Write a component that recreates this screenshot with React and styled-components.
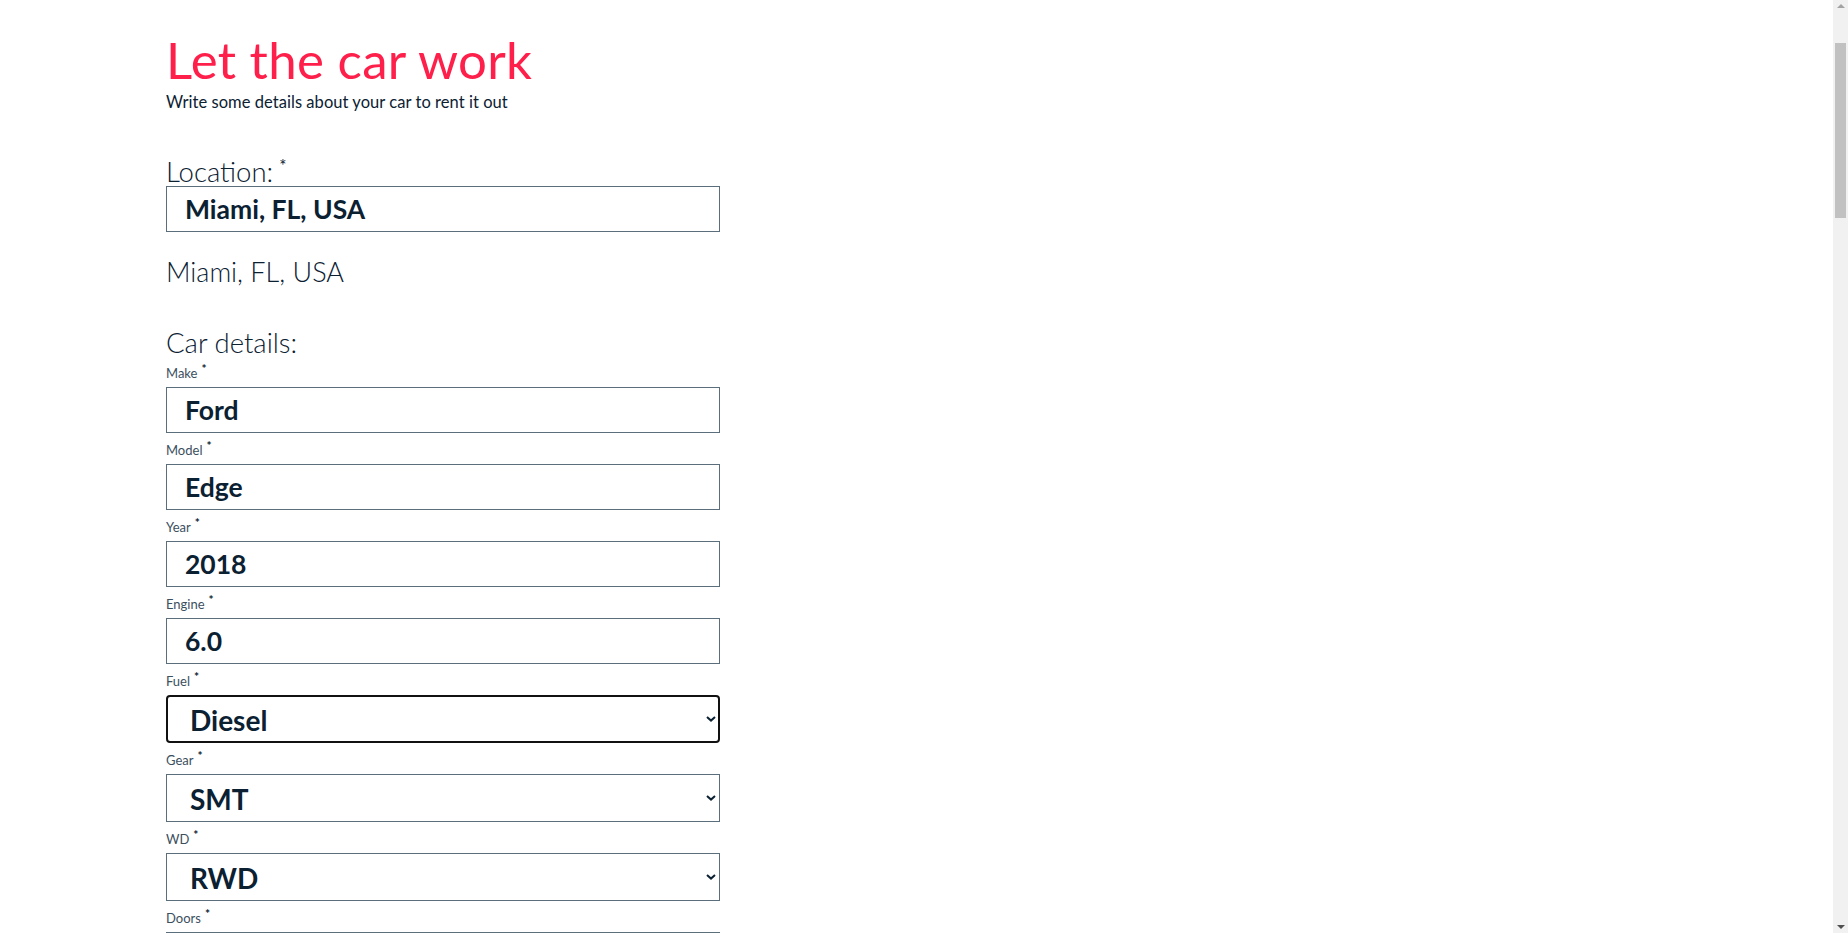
import React from 'react';
import styled, { createGlobalStyle } from 'styled-components';

const GlobalStyle = createGlobalStyle`
	html, body {
		margin: 0;
		padding: 0;
		background: #fff;
	}
	body {
		font-family: Lato, 'Open Sans', sans-serif;
		color: #0b2132;
	}
`;

const fields = [
	{ label: 'Make', value: 'Ford' },
	{ label: 'Model', value: 'Edge' },
	{ label: 'Year', value: '2018' },
	{ label: 'Engine', value: '6.0' },
	{ label: 'Fuel', value: 'Diesel', options: true, focused: true },
	{ label: 'Gear', value: 'SMT', options: true },
	{ label: 'WD', value: 'RWD', options: true },
	{ label: 'Doors', value: '4' },
	{ label: 'Seats', value: '5' },
	{ label: 'Color', value: 'Black' },
	{ label: 'Mileage', value: '24000' },
];

const extras = [
	{ label: 'Price per day', value: '80' },
	{ label: 'Deposit', value: '300' },
	{ label: 'Available from', value: '2020-01-01' },
	{ label: 'Available to', value: '2020-12-31' },
	{ label: 'Phone', value: '' },
	{ label: 'Email', value: '' },
];

const Chevron = () => (
	<svg width="10" height="6" viewBox="0 0 10 6">
		<path d="M1 1 L5 4.6 L9 1" fill="none" stroke="#0b2132" strokeWidth="2" />
	</svg>
);

const Field = ({ label, value, options, focused }) => (
	<FieldBox>
		<Label>{ label }<Star>*</Star></Label>
		{ options ? (
			<SelectBox $focused={ focused }>
				<SelectValue>{ value }</SelectValue>
				<Chevron />
			</SelectBox>
		) : (
			<Input defaultValue={ value } />
		) }
	</FieldBox>
);

const App = () => (
	<>
		<GlobalStyle />
		<Page>
			<Title>Let the car work</Title>
			<Subtitle>Write some details about your car to rent it out</Subtitle>

			<Section $gap={ 45 }>
				<SectionTitle $lh={ 28 }>Location:<BigStar>*</BigStar></SectionTitle>
				<Input defaultValue="Miami, FL, USA" />
				<Address>Miami, FL, USA</Address>
			</Section>

			<Section $gap={ 43 }>
				<SectionTitle $lh={ 26 }>Car details:</SectionTitle>
				{ fields.map(f => <Field key={ f.label } { ...f } />) }
			</Section>

			<Section $gap={ 42 }>
				<SectionTitle $lh={ 26 }>Rental details:</SectionTitle>
				{ extras.map(f => <Field key={ f.label } { ...f } />) }
			</Section>

			<Section $gap={ 42 }>
				<SectionTitle $lh={ 26 }>Description:</SectionTitle>
				<TextArea />
			</Section>

			<Section $gap={ 42 }>
				<SectionTitle $lh={ 26 }>Photos:</SectionTitle>
				<PhotoArea />
			</Section>

			<Submit>Rent it out</Submit>
		</Page>
		<Scrollbar>
			<ArrowUp />
			<Thumb />
			<ArrowDown />
		</Scrollbar>
	</>
);

export default App;

const Page = styled.div`
	width: 554px;
	padding: 29px 0 1600px 166px;
`;

const Title = styled.h1`
	margin: 0;
	font-size: 51px;
	line-height: 62px;
	font-weight: 400;
	color: #fe1f4a;
	letter-spacing: 0.3px;
`;

const Subtitle = styled.p`
	margin: 0;
	font-size: 16.5px;
	line-height: 22px;
	font-weight: 400;
	letter-spacing: 0.05px;
	color: #0b2132;
`;

const Section = styled.div`
	display: flex;
	flex-direction: column;
	margin-top: ${ p => p.$gap }px;
`;

const SectionTitle = styled.div`
	font-size: 27.5px;
	line-height: ${ p => p.$lh }px;
	font-weight: 300;
	color: #0b2132;
`;

const BigStar = styled.span`
	font-size: 17px;
	line-height: 1;
	font-weight: 400;
	margin-left: 6px;
	position: relative;
	top: -10px;
`;

const Star = styled.span`
	font-size: 12px;
	line-height: 1;
	font-weight: 700;
	color: #0b2132;
	margin-left: 4px;
	position: relative;
	top: -5px;
`;

const Address = styled.div`
	font-size: 27px;
	line-height: 30px;
	font-weight: 300;
	margin-top: 25px;
`;

const FieldBox = styled.div`
	display: flex;
	flex-direction: column;
`;

const Label = styled.label`
	display: block;
	height: 16px;
	font-size: 13px;
	line-height: 16px;
	padding: 9px 0 6px;
	color: #3c4f5e;
	font-weight: 400;
`;

const Input = styled.input`
	box-sizing: border-box;
	width: 100%;
	height: 46px;
	border: 1px solid #5b6e7c;
	border-radius: 0;
	padding: 0 18px;
	font-family: Lato, 'Open Sans', sans-serif;
	font-size: 26.5px;
	font-weight: 700;
	color: #0b2132;
	background: #fff;
	outline: none;
`;

const SelectBox = styled.div`
	box-sizing: border-box;
	display: flex;
	align-items: center;
	justify-content: space-between;
	height: 48px;
	padding: 0 ${ p => p.$focused ? 2 : 3 }px 0 ${ p => p.$focused ? 22 : 23 }px;
	border: ${ p => p.$focused ? '2px solid #111' : '1px solid #5b6e7c' };
	border-radius: ${ p => p.$focused ? '4px' : '0' };
	background: #fff;
`;

const SelectValue = styled.span`
	font-size: 28px;
	font-weight: 700;
	color: #0b2132;
	padding-top: 1px;
`;

const TextArea = styled.textarea`
	box-sizing: border-box;
	width: 100%;
	height: 200px;
	border: 1px solid #5b6e7c;
	margin-top: 10px;
`;

const PhotoArea = styled.div`
	height: 260px;
	border: 1px dashed #5b6e7c;
	margin-top: 10px;
`;

const Submit = styled.button`
	margin-top: 40px;
	width: 100%;
	height: 50px;
	border: none;
	background: #fe1f4a;
	color: #fff;
	font-family: Lato, 'Open Sans', sans-serif;
	font-size: 20px;
	cursor: pointer;
`;

const Scrollbar = styled.div`
	position: fixed;
	top: 0;
	right: 0;
	width: 15px;
	height: 100vh;
	background: #f1f1f1;
	display: flex;
	flex-direction: column;
	align-items: center;
`;

const ArrowUp = styled.div`
	margin-top: 4px;
	width: 0;
	height: 0;
	border-left: 4px solid transparent;
	border-right: 4px solid transparent;
	border-bottom: 4px solid #a3a3a3;
`;

const Thumb = styled.div`
	margin-top: 35px;
	width: 11px;
	height: 175px;
	background: #c1c1c1;
`;

const ArrowDown = styled.div`
	margin-top: auto;
	margin-bottom: 4px;
	width: 0;
	height: 0;
	border-left: 4px solid transparent;
	border-right: 4px solid transparent;
	border-top: 4px solid #505050;
`;
